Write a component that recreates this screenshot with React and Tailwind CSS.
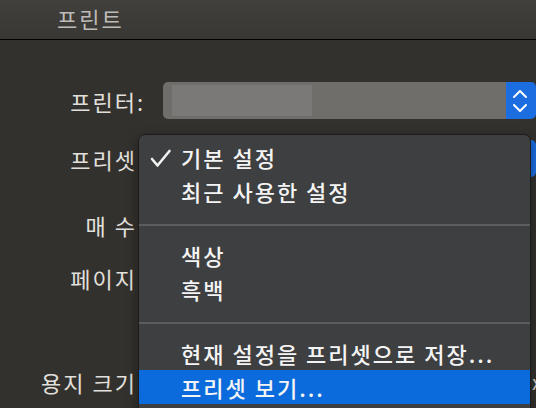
import React from "react";

const font = { fontFamily: '"Noto Sans CJK KR", "Noto Sans", sans-serif' };

function Stepper() {
  return (
    <div className="w-[30px] h-full bg-[#1b6de0] rounded-r-[5px] flex items-center justify-center pr-[2px]">
      <svg width="16" height="28" viewBox="0 0 16 28" fill="none" stroke="#ffffff" strokeWidth="2" strokeLinecap="round" strokeLinejoin="round">
        <path d="M2 10 L8 4 L14 10" />
        <path d="M2 18 L8 24 L14 18" />
      </svg>
    </div>
  );
}

function Row({ label, children, className }) {
  return (
    <div className={"flex items-center h-[37px] " + className}>
      <div className="w-[145px] shrink-0 text-right text-[22px] tracking-[2px] text-[#e2e0dd] leading-none">{label}</div>
      <div className="ml-[18px] flex-1 h-full flex">{children}</div>
    </div>
  );
}

function Item({ children, check, active }) {
  return (
    <div className={"h-[34px] flex items-center relative " + (active ? "bg-[#0b6bdc]" : "")}>
      {check && (
        <svg className="absolute left-[11px] top-[9px]" width="22" height="19" viewBox="0 0 22 19" fill="none" stroke="#f2f2f2" strokeWidth="2.6" strokeLinecap="round" strokeLinejoin="round">
          <path d="M2 10 L7.5 16.5 L19.5 2" />
        </svg>
      )}
      <span className="pl-[42px] text-[22px] font-medium tracking-[2px] leading-none text-[#f4f4f4]">{children}</span>
    </div>
  );
}

function Sep() {
  return <div className="mt-[16px] mb-[12px] h-[2px] bg-[#5c5d60]" />;
}

export default function App() {
  return (
    <div className="w-[536px] h-[408px] overflow-hidden relative bg-[#33312d]" style={font}>
      <div className="h-[40px] border-b border-black bg-gradient-to-b from-[#42403c] to-[#393733] flex items-center pl-[57px]">
        <span className="text-[22px] tracking-[2px] leading-none text-[#bdbbb8] -mt-[4px]">프린트</span>
      </div>

      <div className="flex flex-col">
        <Row label="프린터:" className="mt-[42px]">
          <div className="flex-1 h-full bg-[#6f6e6b] rounded-l-[5px] flex items-center pl-[9px]">
            <div className="w-[140px] h-[31px] bg-[#7a7977]" />
          </div>
          <Stepper />
        </Row>
        <Row label="프리셋:" className="mt-[21px]">
          <div className="flex-1 h-full bg-[#6f6e6b] rounded-l-[5px]" />
          <Stepper />
        </Row>
        <Row label="매 수:" className="mt-[29px]" />
        <Row label="페이지:" className="mt-[16px]" />
        <Row label="용지 크기:" className="mt-[67px]">
          <div className="flex-1" />
          <span className="text-[20px] text-[#cfcdca] leading-none self-center -mr-[6px]">x</span>
        </Row>
      </div>

      <div className="absolute left-[138px] top-[134px] w-[393px] h-[290px] bg-[#3e3f41] border border-[#1c1c1c] rounded-t-[7px] pt-[5px] shadow-[0_4px_12px_rgba(0,0,0,0.4)]">
        <Item check>기본 설정</Item>
        <Item>최근 사용한 설정</Item>
        <Sep />
        <Item>색상</Item>
        <Item>흑백</Item>
        <Sep />
        <Item>현재 설정을 프리셋으로 저장...</Item>
        <Item active>프리셋 보기...</Item>
      </div>
    </div>
  );
}
